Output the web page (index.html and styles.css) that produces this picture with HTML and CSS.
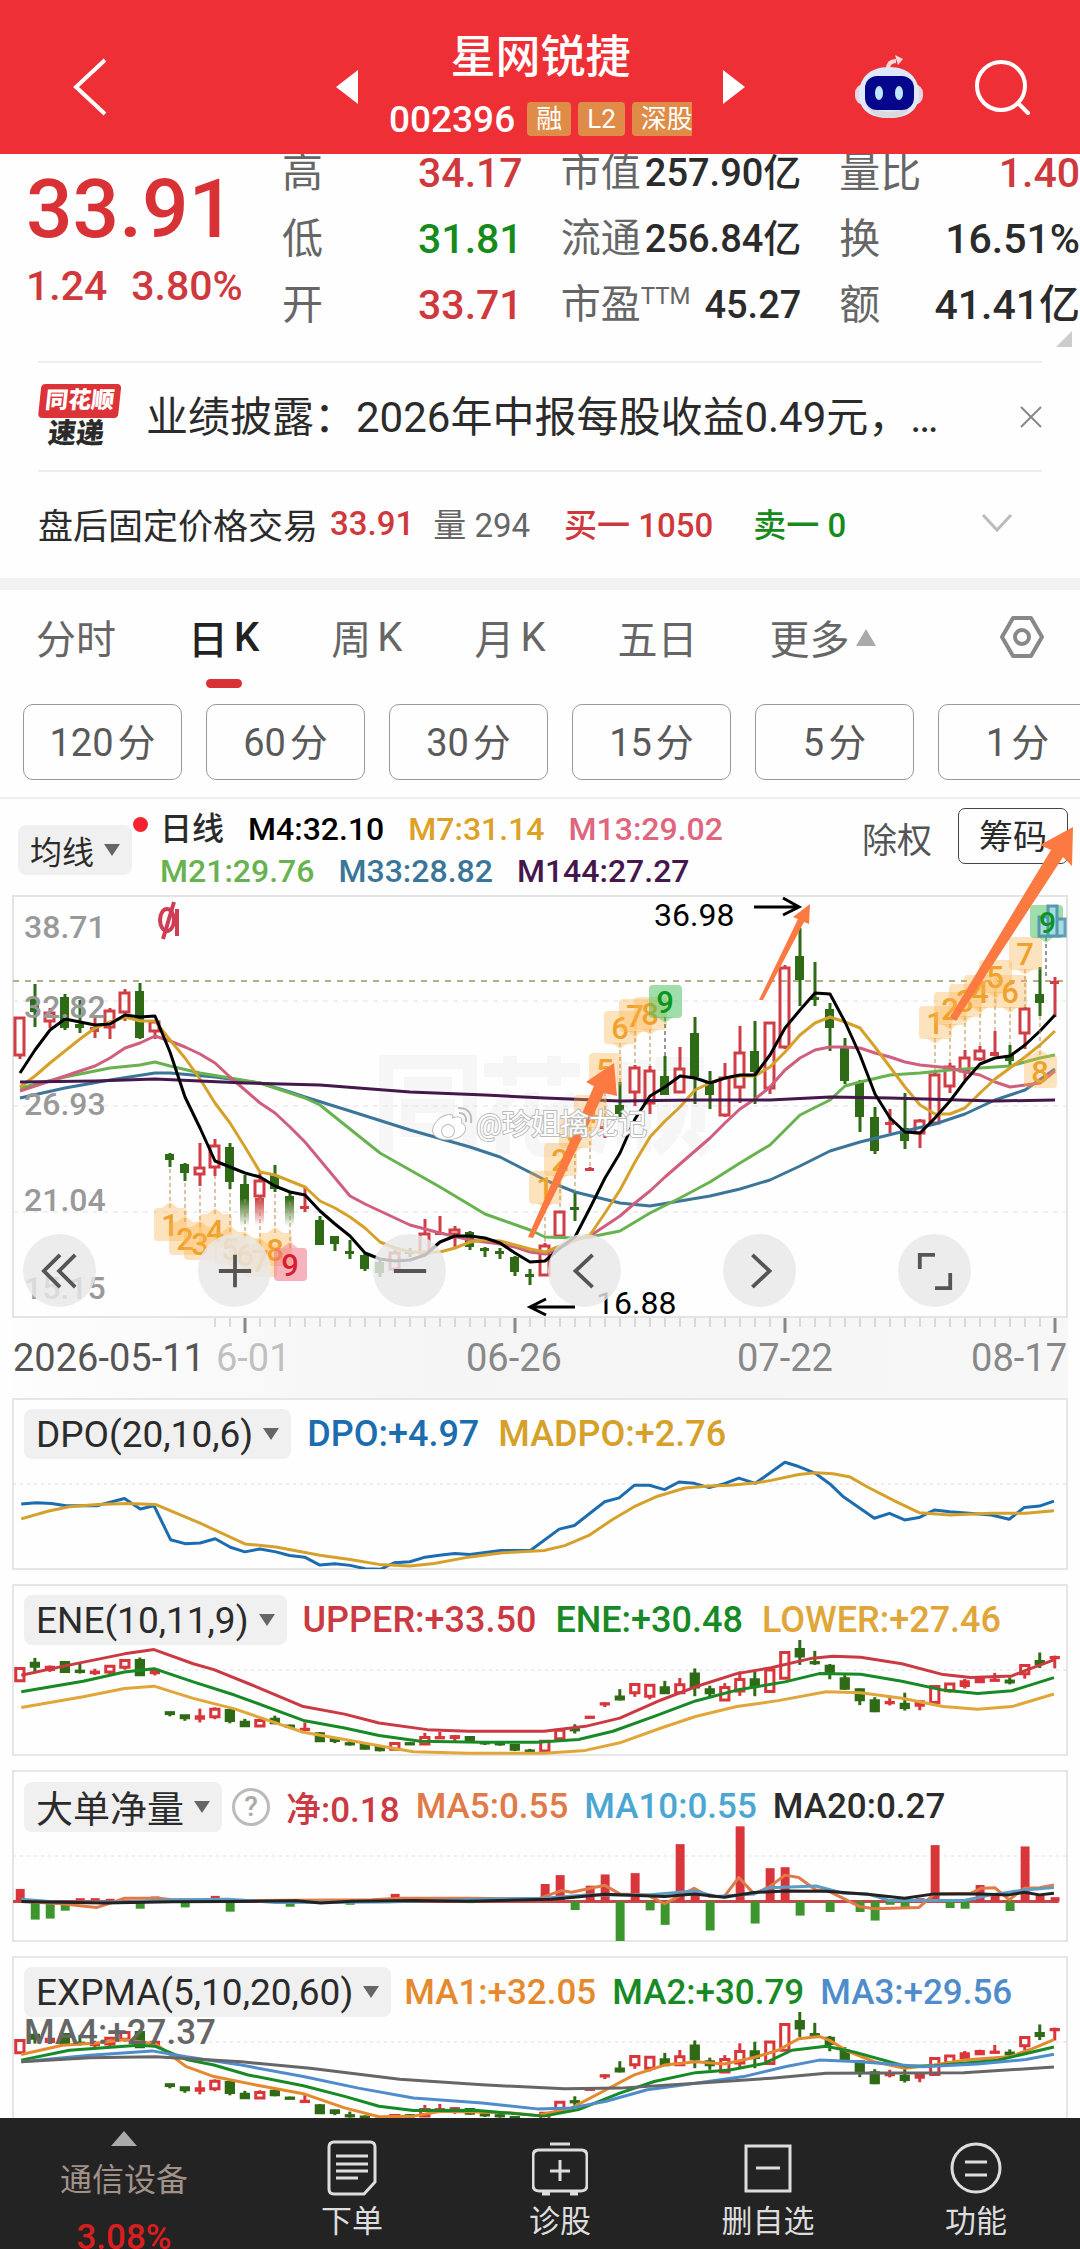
FILE: index.html
```html
<!DOCTYPE html>
<html lang="zh-CN">
<head>
    <meta charset="utf-8">
    <meta name="viewport" content="width=device-width, initial-scale=1">
    <title>星网锐捷 002396</title>
    <link rel="stylesheet" href="styles.css">
</head>
<body>
<header class="topbar">
    <button class="icon-btn back" aria-label="返回">
        <svg width="36" height="60" viewBox="0 0 36 60"><path d="M33 3 4 30 33 57" fill="none" stroke="#fff" stroke-width="4"/></svg>
    </button>
    <div class="stock">
        <button class="icon-btn" aria-label="上一只">
            <svg width="23" height="34" viewBox="0 0 23 34"><path d="M22 0V34L0 17z" fill="#fff"/></svg>
        </button>
        <div class="stock-name">
            <h1>星网锐捷</h1>
            <div class="stock-code">
                <span>002396</span>
                <i class="tag">融</i>
                <i class="tag">L2</i>
                <i class="tag">深股通</i>
            </div>
        </div>
        <button class="icon-btn" aria-label="下一只">
            <svg width="23" height="34" viewBox="0 0 23 34"><path d="M1 0V34L23 17z" fill="#fff"/></svg>
        </button>
    </div>
    <div class="tools">
        <button class="icon-btn" aria-label="助手">
            <svg width="70" height="64" viewBox="0 0 70 64">
                <path d="M34 14C34 8 37 6 42 6" fill="none" stroke="#ffdada" stroke-width="4"/>
                <path d="M41 0 49 4 44 10z" fill="#ffdada"/>
                <rect x="1" y="29" width="68" height="21" rx="9" fill="#e9d5e2"/>
                <path d="M35 12C54 12 65 23 65 39S54 63 35 63 5 55 5 39 16 12 35 12z" fill="#dfe9fb"/>
                <path d="M12 48C24 60 46 60 58 48 55 58 47 63 35 63S15 58 12 48z" fill="#d9d9de"/>
                <rect x="11" y="21" width="49" height="34" rx="12" fill="#06068c"/>
                <ellipse cx="25" cy="38" rx="4" ry="7" fill="#bfe6ff"/>
                <ellipse cx="45" cy="38" rx="4" ry="7" fill="#bfe6ff"/>
            </svg>
        </button>
        <button class="icon-btn" aria-label="搜索">
            <svg width="56" height="56" viewBox="0 0 56 56" fill="none" stroke="#fff" stroke-width="4">
                <circle cx="27" cy="27" r="24"/><path d="M44 44 54 54" stroke-linecap="round"/>
            </svg>
        </button>
    </div>
</header>

<section class="quote">
    <div class="price">
        <strong>33.91</strong>
        <p><span>1.24</span><span>3.80%</span></p>
    </div>
    <ul>
        <li><span>高</span><b class="up">34.17</b></li>
        <li><span>低</span><b class="down">31.81</b></li>
        <li><span>开</span><b class="up">33.71</b></li>
    </ul>
    <ul class="tight">
        <li><span>市值</span><b>257.90亿</b></li>
        <li><span>流通</span><b>256.84亿</b></li>
        <li><span>市盈<sup>TTM</sup></span><b>45.27</b></li>
    </ul>
    <ul>
        <li><span>量比</span><b class="up">1.40</b></li>
        <li><span>换</span><b>16.51%</b></li>
        <li><span>额</span><b>41.41亿</b></li>
    </ul>
    <svg class="corner" width="16" height="16" viewBox="0 0 16 16"><path d="M16 0V16H0z" fill="#ccc"/></svg>
</section>

<section class="news">
    <div class="news-logo">
        <b>同花顺</b>
        <span>速递</span>
    </div>
    <a href="#">业绩披露：2026年中报每股收益0.49元，…</a>
    <button class="icon-btn" aria-label="关闭">
        <svg width="22" height="22" viewBox="0 0 22 22"><path d="M1 1 21 21M21 1 1 21" stroke="#888" stroke-width="2"/></svg>
    </button>
</section>

<section class="after">
    <span class="after-title">盘后固定价格交易</span>
    <span class="up">33.91</span>
    <span class="vol">量 294</span>
    <span class="up">买一 1050</span>
    <span class="down">卖一 0</span>
    <button class="icon-btn" aria-label="展开">
        <svg width="32" height="20" viewBox="0 0 32 20"><path d="M2 2 16 17 30 2" fill="none" stroke="#bbb" stroke-width="3"/></svg>
    </button>
</section>

<nav class="tabs">
    <button>分时</button>
    <button class="active">日<span>K</span></button>
    <button>周<span>K</span></button>
    <button>月<span>K</span></button>
    <button>五日</button>
    <button>更多<svg width="20" height="17" viewBox="0 0 20 17"><path d="M10 0 20 17H0z" fill="#aaa"/></svg></button>
    <button class="setting" aria-label="设置">
        <svg width="44" height="44" viewBox="0 0 44 44" fill="none" stroke="#888" stroke-width="4">
            <path d="M13 3H31L42 22 31 41H13L2 22z" stroke-linejoin="round"/><circle cx="22" cy="22" r="7"/>
        </svg>
    </button>
</nav>

<div class="periods">
    <button>120<span>分</span></button>
    <button>60<span>分</span></button>
    <button>30<span>分</span></button>
    <button>15<span>分</span></button>
    <button>5<span>分</span></button>
    <button>1<span>分</span></button>
</div>

<section class="kline">
    <div class="kline-head">
        <button class="picker">均线<svg width="16" height="12" viewBox="0 0 16 12"><path d="M0 0H16L8 12z" fill="#666"/></svg></button>
        <div class="legend">
            <p><span class="dark">日线</span><span class="black">M4:32.10</span><span class="m7">M7:31.14</span><span class="m13">M13:29.02</span></p>
            <p><span class="m21">M21:29.76</span><span class="m33">M33:28.82</span><span class="m144">M144:27.27</span></p>
        </div>
        <button class="plain">除权</button>
        <button class="boxed">筹码</button>
    </div>
    <svg id="main" class="main-chart" viewBox="12 895 1056 503">
        <defs>
            <linearGradient id="fade-down" x1="0" y1="0" x2="0" y2="1"><stop offset="0" stop-color="#2f6b16"/><stop offset="1" stop-color="#2f6b16" stop-opacity="0"/></linearGradient>
            <linearGradient id="fade-up" x1="0" y1="0" x2="0" y2="1"><stop offset="0" stop-color="#cf3d45"/><stop offset="1" stop-color="#cf3d45" stop-opacity="0"/></linearGradient>
            <linearGradient id="axis-bg" x1="0" y1="0" x2="1" y2="0"><stop offset="0" stop-color="#fdfdfd"/><stop offset=".4" stop-color="#f5f5f5"/><stop offset="1" stop-color="#f7f7f7"/></linearGradient>
        </defs>
        <rect x="13" y="1318" width="1055" height="80" fill="url(#axis-bg)"/>
        <rect x="13" y="896" width="1054" height="421" fill="#fefefe" stroke="#e4e4e4" stroke-width="2"/>
        <g class="brand-mark" fill="none" stroke="#f6f6f6" stroke-width="14">
            <path d="M386 1152V1062H470V1152M404 1084H452M408 1106H448V1130H408z"/>
            <path d="M484 1070H580M510 1056V1086M554 1056V1086M512 1092 490 1124M503 1112V1154M532 1092V1140Q532 1150 544 1150H576M576 1098 534 1122"/>
            <path d="M604 1062V1120L596 1152M624 1062V1146M644 1060V1152M656 1064H704M664 1132V1084H698V1132M680 1100Q680 1134 656 1150M686 1132 706 1152"/>
        </g>
        <g class="grid">
            <path d="M13 1001H1066M13 1106H1066M13 1212H1066"/>
            <path class="now" d="M13 981H1066"/>
        </g>
        <g id="main-candles"></g>
        <g id="main-lines"></g>
        <g class="price-axis">
            <text x="24" y="938">38.71</text>
            <text x="24" y="1018">32.82</text>
            <text x="24" y="1115">26.93</text>
            <text x="24" y="1211">21.04</text>
            <text x="24" y="1299">15.15</text>
        </g>
        <g fill="none" stroke="#cf3d55" stroke-width="4">
            <ellipse cx="167" cy="920" rx="7" ry="11"/><path d="M177 909V936M174 902 163 939"/>
        </g>
        <g id="marks"></g>
        <path d="M1039 917H1048V936H1039zM1048 906H1057V936H1048zM1057 919H1065V936H1057z" fill="#a8dcea" stroke="#4a8cae" stroke-width="3" opacity=".85"/>
        <text class="nine" x="1039" y="933">9</text>
        <g class="peak">
            <text x="654" y="926">36.98</text>
            <path d="M754 907H798M783 898 799 907 783 915"/>
            <text x="596" y="1314">16.88</text>
            <path d="M575 1307H531M546 1299 530 1307 546 1315"/>
        </g>
        <g class="trend">
            <path d="M614 1063 586 1082 594 1086 528 1237 533 1238 604 1093 617 1096z"/>
            <path d="M810 904 793 917 798 919 759 1000 763 1000 804 922 809 924z"/>
            <path d="M1073 827 1040 845 1051 850 950 1017 956 1021 1063 857 1072 866z"/>
        </g>
        <g class="weibo">
            <path d="M449 1115C437 1117 431 1128 434 1134 439 1142 462 1141 465 1130 466 1125 462 1124 461 1123 463 1117 457 1116 452 1119 453 1116 452 1114 449 1115z"/>
            <path d="M459 1113Q467 1113 466 1122M458 1108Q473 1108 471 1123" class="wave"/>
            <circle cx="448" cy="1131" r="6"/>
            <text x="476" y="1135">@珍姐擒龙记</text>
        </g>
        <g id="ticks"></g>
        <g class="date-axis">
            <text x="13" y="1371" class="first">2026-05-11</text>
            <text x="216" y="1371" fill-opacity=".5">6-01</text>
            <text x="466" y="1371">06-26</text>
            <text x="737" y="1371">07-22</text>
            <text x="1067" y="1371" text-anchor="end">08-17</text>
        </g>
    </svg>
    <div class="chart-tools">
        <button aria-label="最早"><svg viewBox="0 0 40 40"><path d="M20 3 3 20 20 37M36 3 19 20 36 37"/></svg></button>
        <button aria-label="放大"><svg viewBox="0 0 40 40"><path d="M20 3V37M3 20H37"/></svg></button>
        <button aria-label="缩小"><svg viewBox="0 0 40 40"><path d="M3 20H37"/></svg></button>
        <button aria-label="前移"><svg viewBox="0 0 40 40"><path d="M28 3 10 20 28 37"/></svg></button>
        <button aria-label="后移"><svg viewBox="0 0 40 40"><path d="M12 3 30 20 12 37"/></svg></button>
        <button aria-label="全屏"><svg viewBox="0 0 40 40"><path d="M4 18V3H20M36 22V38H20"/></svg></button>
    </div>
</section>

<section class="panel">
    <svg id="dpo" viewBox="18 23 1532 516" preserveAspectRatio="none"></svg>
    <div class="panel-head wide">
        <button class="picker">DPO(20,10,6)<svg width="16" height="12" viewBox="0 0 16 12"><path d="M0 0H16L8 12z" fill="#666"/></svg></button>
        <span class="blue">DPO:+4.97</span><span class="gold">MADPO:+2.76</span>
    </div>
</section>
<section class="panel">
    <svg id="ene" viewBox="18 581 1532 516" preserveAspectRatio="none"></svg>
    <div class="panel-head wide">
        <button class="picker">ENE(10,11,9)<svg width="16" height="12" viewBox="0 0 16 12"><path d="M0 0H16L8 12z" fill="#666"/></svg></button>
        <span class="red">UPPER:+33.50</span><span class="green">ENE:+30.48</span><span class="amber">LOWER:+27.46</span>
    </div>
</section>
<section class="panel">
    <svg id="net" viewBox="18 29 1532 516" preserveAspectRatio="none"></svg>
    <div class="panel-head">
        <button class="picker">大单净量<svg width="16" height="12" viewBox="0 0 16 12"><path d="M0 0H16L8 12z" fill="#666"/></svg></button>
        <button class="help" aria-label="说明">?</button>
        <span class="red">净:0.18</span><span class="coral">MA5:0.55</span><span class="sky">MA10:0.55</span><span class="dark">MA20:0.27</span>
    </div>
</section>
<section class="panel">
    <svg id="expma" viewBox="18 587 1532 516" preserveAspectRatio="none"></svg>
    <div class="panel-head">
        <button class="picker">EXPMA(5,10,20,60)<svg width="16" height="12" viewBox="0 0 16 12"><path d="M0 0H16L8 12z" fill="#666"/></svg></button>
        <span class="orange">MA1:+32.05</span><span class="green">MA2:+30.79</span><span class="steel">MA3:+29.56</span>
        <span class="gray">MA4:+27.37</span>
    </div>
</section>

<footer class="bottom">
    <button class="sector">
        <svg width="26" height="15" viewBox="0 0 26 15"><path d="M13 0 26 15H0z" fill="#aaa"/></svg>
        <span>通信设备</span>
        <b>3.08%</b>
    </button>
    <button>
        <svg width="56" height="56" viewBox="0 0 56 56"><path d="M10 2H46Q51 2 51 7V42L40 54H10Q5 54 5 49V7Q5 2 10 2zM12 16H44M12 24H44M12 31H44M12 38H34"/></svg>
        <span>下单</span>
    </button>
    <button>
        <svg width="56" height="56" viewBox="0 0 56 56"><path d="M7 10H49Q55 10 55 16V45Q55 51 49 51H7Q1 51 1 45V16Q1 10 7 10zM18 4H38M10 54H18M38 54H46M28 20V41M18 31H38"/></svg>
        <span>诊股</span>
    </button>
    <button>
        <svg width="56" height="56" viewBox="0 0 56 56"><path d="M6 6H50V51H6zM16 28H40"/></svg>
        <span>删自选</span>
    </button>
    <button>
        <svg width="56" height="56" viewBox="0 0 56 56"><circle cx="28" cy="28" r="24"/><path d="M17 22H39M17 35H39"/></svg>
        <span>功能</span>
    </button>
</footer>
<script src="app.js"></script>
</body>
</html>
```

FILE: styles.css
```css
* {
    box-sizing: border-box;
}

body {
    margin: 0;
    background: #fefefe;
    color: #2b2b2b;
    font-family: Roboto, "Noto Sans CJK SC", sans-serif;
    overflow-x: hidden;
}

button {
    border: none;
    padding: 0;
    background: none;
    color: inherit;
    font: inherit;
    cursor: pointer;
}

button svg {
    display: block;
}

h1, p, ul {
    margin: 0;
    padding: 0;
}

.up {
    color: #cf383c;
}

.down {
    color: #178a1c;
}

/* top bar */
.topbar {
    position: relative;
    z-index: 2;
    display: flex;
    align-items: center;
    height: 154px;
    padding: 20px 50px 0 72px;
    background: #ef2f36;
    color: #fff;
}

.back {
    margin-right: 228px;
}

.stock {
    display: flex;
    align-items: center;
    gap: 30px;
}

.stock-name {
    width: 303px;
    margin-top: 4px;
    text-align: center;
}

.stock-name h1 {
    font-size: 45px;
    line-height: 60px;
    font-weight: 500;
}

.stock-code {
    display: flex;
    align-items: center;
    gap: 7px;
    height: 62px;
    overflow: hidden;
    font-size: 37px;
    font-weight: 500;
}

.stock-code span {
    margin-right: 5px;
}

.tag {
    flex: none;
    padding: 0 9px;
    border-radius: 4px;
    background: #df8c48;
    font-size: 26px;
    line-height: 34px;
    font-style: normal;
    font-weight: 400;
}

.tools {
    display: flex;
    align-items: center;
    gap: 50px;
    margin-left: auto;
}

/* quote */
.quote {
    position: relative;
    display: grid;
    grid-template-columns: 218px 1fr 1fr 1fr;
    column-gap: 38px;
    height: 207px;
    padding-left: 26px;
}

.price {
    color: #d93236;
}

.price strong {
    display: block;
    margin-top: 8px;
    font-size: 82px;
    line-height: 94px;
    font-weight: 500;
}

.price p {
    display: flex;
    gap: 24px;
    margin-top: 4px;
    font-size: 41px;
    line-height: 52px;
    color: #cf383c;
    font-weight: 500;
    white-space: nowrap;
}

.quote ul {
    margin-top: -14px;
    list-style: none;
    font-size: 41px;
    line-height: 66px;
    white-space: nowrap;
}

.quote li {
    display: flex;
    justify-content: space-between;
    height: 66px;
}

.quote li span {
    color: #666;
}

.quote li b {
    font-weight: 500;
}

.quote .tight {
    font-size: 40px;
}

.quote .tight b {
    font-size: 38px;
}

.quote sup {
    font-size: 24px;
    line-height: 0;
}

.corner {
    position: absolute;
    right: 8px;
    bottom: 14px;
}

/* news row */
.news {
    display: flex;
    align-items: center;
    height: 111px;
    margin: 0 38px;
    border-top: 2px solid #eee;
    border-bottom: 2px solid #eee;
}

.news-logo {
    width: 80px;
    margin-right: 28px;
    transform: skewX(-6deg);
    text-align: center;
    font-weight: 900;
}

.news-logo b {
    display: block;
    border-radius: 4px;
    background: #dc3338;
    color: #fff;
    font-size: 23px;
    line-height: 34px;
}

.news-logo span {
    display: block;
    font-size: 28px;
    line-height: 32px;
}

.news a {
    flex: 1;
    padding-bottom: 6px;
    color: #2b2b2b;
    font-size: 42px;
    text-decoration: none;
    white-space: nowrap;
}

/* after-hours row */
.after {
    display: flex;
    align-items: center;
    height: 106px;
    padding: 0 67px 4px 38px;
    font-size: 33px;
}

.after-title {
    margin-right: 12px;
    font-size: 35px;
}

.after .up,
.after .down {
    font-weight: 500;
}

.after .vol {
    margin: 0 34px 0 19px;
    color: #666;
}

.after .down {
    margin-left: 40px;
}

.after .icon-btn {
    margin-left: auto;
}

/* tabs */
.tabs {
    display: flex;
    align-items: center;
    gap: 72px;
    height: 126px;
    padding: 0 36px 20px;
    border-top: 12px solid #f3f3f3;
    color: #666;
    font-size: 40px;
}

.tabs button {
    position: relative;
    display: flex;
    align-items: center;
    gap: 6px;
}

.tabs .active {
    color: #222;
    font-weight: 500;
}

.tabs .active::after {
    content: "";
    position: absolute;
    bottom: -22px;
    left: 50%;
    width: 36px;
    height: 9px;
    margin-left: -18px;
    border-radius: 5px;
    background: #d93236;
}

.tabs .setting {
    margin-left: auto;
}

.periods {
    display: flex;
    gap: 24px;
    height: 95px;
    padding-left: 23px;
    border-bottom: 2px solid #eee;
    overflow: hidden;
}

.periods button {
    flex: none;
    width: 159px;
    height: 76px;
    padding-bottom: 5px;
    border: 1px solid #999;
    border-radius: 10px;
    color: #5a5a5a;
    font-size: 38px;
}

.periods span {
    margin-left: 4px;
}

/* main chart */
.kline {
    position: relative;
}

.kline-head {
    display: flex;
    align-items: flex-start;
    height: 96px;
    padding: 9px 12px 0 18px;
}

.picker {
    display: flex;
    align-items: center;
    gap: 10px;
    height: 50px;
    padding: 0 12px;
    border-radius: 8px;
    background: #f0f0f0;
}

.kline-head .picker {
    position: relative;
    margin-top: 17px;
    font-size: 32px;
}

.kline-head .picker::after {
    content: "";
    position: absolute;
    top: -8px;
    right: -16px;
    width: 15px;
    height: 15px;
    border-radius: 50%;
    background: #f5232f;
}

.legend {
    margin-left: 28px;
    font-size: 32px;
    font-weight: 500;
    line-height: 42px;
}

.legend p {
    display: flex;
    gap: 24px;
    white-space: nowrap;
}

.kline-head .plain {
    margin: 8px 26px 0 auto;
    color: #555;
    font-size: 35px;
    line-height: 52px;
}

.kline-head .boxed {
    width: 110px;
    height: 56px;
    padding-bottom: 3px;
    border: 1px solid #444;
    border-radius: 7px;
    font-size: 34px;
}

.dark { color: #2b2b2b; }
.black { color: #000; }
.m7 { color: #dca125; }
.m13 { color: #e0657f; }
.m21 { color: #68b34f; }
.m33 { color: #3b759a; }
.m144 { color: #45174c; }
.blue { color: #1c6cb0; }
.gold { color: #d6a12b; }
.red { color: #cb3a42; }
.green { color: #178a25; }
.amber { color: #e0a63a; }
.coral { color: #e07a48; }
.sky { color: #4ba6d3; }
.orange { color: #e5892f; }
.steel { color: #4f8ccb; }
.gray { color: #666; }

.main-chart {
    display: block;
    position: relative;
    width: calc(100% - 24px);
    margin: 0 12px;
    overflow: visible;
}

.grid path {
    stroke: #e2e2e2;
    stroke-width: 1;
    stroke-dasharray: 5 5;
}

.grid .now {
    stroke: #b5ae84;
    stroke-width: 2;
    stroke-dasharray: 6 6;
}

.price-axis text {
    fill: #999;
    font-size: 32px;
    font-weight: 500;
}

.date-axis text {
    fill: #888;
    font-size: 38px;
}

.date-axis .first {
    fill: #555;
}

.peak text {
    font-size: 32px;
}

.peak path {
    fill: none;
    stroke: #000;
    stroke-width: 3;
}

.trend path {
    fill: #fb7a42;
}

.nine {
    fill: #0a9420;
    font-size: 30px;
    font-weight: 500;
}

.weibo {
    fill: #fff;
    stroke: #bbb;
    stroke-width: 2;
    paint-order: stroke;
}

.weibo text {
    font-size: 29px;
}

.weibo .wave {
    fill: none;
}

.chart-tools {
    position: absolute;
    left: 23px;
    bottom: 91px;
    display: flex;
    gap: 102px;
}

.chart-tools button {
    display: flex;
    align-items: center;
    justify-content: center;
    width: 73px;
    height: 73px;
    border-radius: 50%;
    background: rgba(232, 232, 232, .82);
}

.chart-tools svg {
    width: 38px;
    height: 38px;
    fill: none;
    stroke: #555;
    stroke-width: 4;
}

/* indicator panels */
.panel {
    position: relative;
    height: 172px;
    margin: 0 12px 14px;
    border: 2px solid #e6e6e6;
}

.panel > svg {
    position: absolute;
    inset: -1px;
    width: calc(100% + 2px);
    height: calc(100% + 2px);
}

.panel-head {
    position: relative;
    display: flex;
    flex-wrap: wrap;
    align-items: center;
    column-gap: 16px;
    padding: 9px 0 0 10px;
    font-size: 35px;
    font-weight: 500;
    white-space: nowrap;
}

.panel-head.wide {
    column-gap: 19px;
    font-size: 36px;
}

.panel-head .picker {
    font-size: 37px;
    font-weight: 400;
}

.panel-head .picker + span {
    margin-left: -3px;
}

.panel-head .gray {
    margin-top: -5px;
}

.help {
    width: 38px;
    height: 38px;
    margin: 0 0 0 -6px;
    border: 3px solid #bbb;
    border-radius: 50%;
    color: #aaa;
    font-size: 28px;
    line-height: 32px;
}

/* bottom bar */
.bottom {
    position: relative;
    z-index: 2;
    display: flex;
    height: 132px;
    margin-top: -24px;
    background: #232323;
    color: #ddd;
    font-size: 31px;
    overflow: hidden;
}

.bottom button {
    display: flex;
    flex: 208;
    flex-direction: column;
    align-items: center;
    padding-top: 22px;
    line-height: 44px;
}

.bottom button svg {
    flex: none;
    margin-bottom: 4px;
    fill: none;
    stroke: #ddd;
    stroke-width: 3;
}

.bottom .sector {
    flex: 248;
    padding-top: 13px;
    color: #a19188;
    font-size: 32px;
}

.bottom .sector svg {
    margin-bottom: 12px;
    stroke: none;
}

.bottom .sector b {
    margin-top: 14px;
    color: #d81e1e;
    font-size: 35px;
    font-weight: 500;
}
```

FILE: app.js
```js
const NS = "http://www.w3.org/2000/svg";
const RED = "#cf3d45";
const GREEN = "#2f6b16";

// [up, high, body top, body bottom, low]
const candles = [
    [1,1017,1017,1056,1059],[0,984,999,1012,1027],[1,1008,1012,1022,1028],[0,994,997,1028,1030],[0,1000,1024,1028,1033],
    [1,1018,1027,1032,1038],[1,1008,1010,1028,1039],[1,989,992,1013,1021],[0,983,991,1038,1039],[1,1020,1021,1032,1039],
    [0,1153,1154,1160,1167],[0,1163,1164,1173,1181],[1,1143,1167,1175,1186],[1,1139,1145,1168,1176],[0,1143,1147,1182,1189],
    [0,1175,1184,1198,1199],[1,1173,1180,1197,1198],[0,1165,1175,1189,1192],[0,1193,1196,1199,1200],[1,1186,1206,1208,1212],
    [0,1216,1220,1245,1245],[0,1236,1236,1244,1251],[0,1240,1251,1253,1259],[0,1252,1255,1269,1271],[0,1260,1262,1273,1277],
    [1,1250,1252,1270,1271],[0,1248,1251,1253,1257],[1,1219,1233,1254,1255],[1,1216,1232,1235,1235],[1,1226,1229,1235,1247],
    [0,1231,1232,1247,1250],[0,1247,1248,1251,1257],[0,1248,1251,1253,1259],[0,1256,1257,1272,1276],[0,1269,1274,1276,1285],
    [1,1243,1245,1276,1276],[1,1211,1211,1237,1237],[0,1192,1207,1209,1221],[1,1167,1168,1170,1170],[1,1123,1126,1129,1138],
    [0,1082,1105,1114,1117],[1,1065,1067,1093,1106],[1,1066,1070,1104,1114],[0,1056,1076,1095,1095],[1,1047,1068,1093,1093],
    [0,1017,1033,1077,1104],[0,1071,1082,1095,1109],[1,1063,1077,1116,1117],[1,1026,1052,1088,1103],[0,1021,1051,1072,1104],
    [1,1022,1022,1089,1094],[1,965,967,1048,1049],[0,928,956,980,1006],[0,962,997,999,1006],[0,1003,1009,1028,1051],
    [0,1038,1048,1081,1084],[0,1080,1082,1117,1132],[0,1107,1117,1151,1154],[1,1109,1122,1124,1133],[0,1093,1128,1141,1149],
    [1,1119,1120,1134,1148],[1,1072,1074,1124,1125],[1,1063,1066,1087,1093],[1,1050,1057,1072,1080],[1,1046,1050,1060,1061],
    [1,1031,1052,1056,1056],[0,1045,1055,1061,1067],[1,1007,1008,1034,1049],[0,967,994,1003,1016],[1,977,981,984,1017]
];

// moving averages as [index, y] pairs
const averages = [
    ["#3b759a", 3, [0,1098,3,1088,6,1080,9,1073,10,1073,13,1077,16,1083,18,1092,19,1097,22,1111,26,1130,30,1147,32,1157,35,1180,37,1192,40,1203,42,1206,44,1201,46,1196,48,1189,50,1180,52,1166,54,1151,56,1142,59,1131,61,1124,63,1114,65,1100,67,1090,69,1069]],
    ["#68b34f", 3, [0,1088,3,1077,6,1068,8,1065,9,1062,10,1066,12,1073,14,1078,16,1083,19,1098,20,1105,24,1153,28,1187,31,1214,34,1230,35,1237,37,1238,38,1237,40,1231,42,1213,44,1198,46,1182,48,1163,50,1145,52,1115,54,1100,55,1086,56,1082,58,1075,60,1073,62,1070,64,1068,66,1066,68,1058,69,1055]],
    ["#cf5f7c", 3, [0,1091,3,1076,5,1066,6,1058,7,1048,8,1043,9,1036,10,1041,11,1047,12,1054,13,1063,14,1077,15,1090,16,1103,17,1113,18,1127,19,1142,20,1160,21,1178,22,1196,23,1204,24,1211,25,1218,26,1225,27,1229,28,1233,30,1240,32,1244,33,1247,34,1252,35,1254,36,1248,37,1240,38,1236,39,1226,40,1216,41,1203,42,1191,43,1177,44,1164,45,1151,46,1138,47,1123,48,1109,49,1099,50,1087,51,1070,52,1058,53,1050,54,1047,55,1047,56,1048,57,1053,58,1057,59,1062,60,1065,62,1068,63,1072,64,1075,65,1082,66,1087,67,1085,68,1083,69,1071]],
    ["#d6a12b", 3, [0,1087,1,1076,2,1063,3,1051,4,1039,5,1028,6,1022,7,1017,8,1021,9,1021,10,1040,11,1058,12,1079,13,1103,14,1123,15,1147,16,1172,17,1175,18,1181,19,1187,20,1201,21,1208,22,1217,23,1228,24,1242,25,1248,26,1252,28,1252,29,1248,30,1242,31,1240,32,1241,33,1245,34,1249,35,1252,36,1246,37,1240,38,1235,39,1213,40,1190,41,1162,42,1137,43,1121,44,1107,45,1090,46,1083,47,1078,48,1076,49,1076,50,1067,51,1052,52,1035,53,1023,54,1017,55,1022,56,1028,57,1047,58,1067,59,1087,60,1105,61,1114,62,1114,63,1108,64,1093,65,1079,66,1068,67,1057,68,1045,69,1031]],
    ["#45174c", 3, [0,1082,5,1081,9,1079,15,1083,20,1085,26,1092,31,1095,35,1098,40,1101,45,1100,50,1100,54,1097,58,1098,65,1101,69,1100]],
    ["#000", 3, [0,1073,1,1050,2,1030,3,1019,4,1022,5,1025,6,1024,7,1015,8,1017,9,1016,10,1052,11,1097,12,1128,13,1161,14,1167,15,1173,16,1177,17,1186,18,1192,19,1195,20,1211,21,1224,22,1236,23,1253,24,1259,25,1261,26,1260,27,1255,28,1242,29,1236,30,1236,31,1238,32,1243,33,1253,34,1262,35,1261,36,1248,37,1237,38,1208,39,1178,40,1153,41,1119,42,1096,43,1087,44,1076,45,1078,46,1083,47,1078,48,1075,49,1075,50,1055,51,1028,52,1010,53,993,54,994,55,1022,56,1055,57,1094,58,1118,59,1132,60,1133,61,1118,62,1101,63,1081,64,1064,65,1058,66,1056,67,1045,68,1031,69,1015]]
];

// sequence marks: [candle index, digit, box centre, kind, 1 = box above the candle]
const marks = [
    [10,1,1224,"n",0],[11,2,1238,"n",0],[12,3,1243,"n",0],[13,4,1230,"n",0],[14,5,1248,"n",0],[15,6,1254,"n",0],[16,7,1260,"n",0],[17,8,1249,"n",0],[18,9,1264,"r",0],
    [35,1,1187,"n",1],[36,2,1159,"n",1],[37,3,1131,"n",1],[38,4,1111,"n",1],[39,5,1069,"n",1],[40,6,1027,"n",1],[41,7,1015,"n",1],[42,8,1013,"n",1],[43,9,1001,"g",1],
    [61,1,1022,"n",1],[62,2,1008,"n",1],[63,3,1000,"n",1],[64,4,991,"n",1],[65,5,976,"n",1],[66,6,991,"n",1],[67,7,953,"n",1],[68,8,1071,"n",0],[69,9,921,"g",1]
];

function add(parent, tag, attrs, text) {
    const node = document.createElementNS(NS, tag);
    for (const key in attrs) {
        node.setAttribute(key, attrs[key]);
    }
    if (text !== undefined) {
        node.textContent = text;
    }
    parent.appendChild(node);
    return node;
}

const byId = id => document.getElementById(id);
const mainX = i => 20 + i * 15;

// main candles
function drawMain() {
    const g = byId("main-candles");
    candles.forEach(([up, high, top, bottom, low], i) => {
        const x = mainX(i);
        const color = up ? RED : GREEN;
        const h = Math.max(bottom - top, 3);
        if (up && h > 5) {
            add(g, "path", { d: `M${x} ${high}V${top}M${x} ${bottom}V${low}`, stroke: color, "stroke-width": 3 });
            add(g, "rect", { x: x - 5, y: top + 1, width: 9, height: h - 2, fill: "none", stroke: color, "stroke-width": 3 });
        } else {
            add(g, "path", { d: `M${x} ${high}V${low}`, stroke: color, "stroke-width": 3 });
            add(g, "rect", { x: x - 5, y: top, width: 9, height: h, fill: color });
        }
    });
    [15, 16, 18].forEach(i => {
        add(g, "rect", { x: mainX(i) - 5, y: 1198, width: 9, height: 28, fill: i === 16 ? "url(#fade-up)" : "url(#fade-down)" });
    });

    const lines = byId("main-lines");
    averages.forEach(([color, width, data]) => {
        let d = "";
        for (let i = 0; i < data.length; i += 2) {
            d += (i ? "L" : "M") + mainX(data[i]) + " " + data[i + 1];
        }
        add(lines, "path", { d: d, fill: "none", stroke: color, "stroke-width": width, "stroke-linejoin": "round" });
    });

    const box = byId("marks");
    const skin = { n: ["#fbb54a", "#efa12c"], r: ["#f2667a", "#d81f32"], g: ["#3fbd55", "#0a9420"] };
    marks.forEach(([i, digit, y, kind, above]) => {
        const x = i === 69 ? 1046 : mainX(i);
        const [bg, fg] = skin[kind];
        add(box, "path", { d: above ? `M${x} ${y + 16}V${candles[i][1]}` : `M${x} ${y - 16}V${candles[i][4]}`, stroke: kind === "g" ? "#333" : "#b98a4a", "stroke-dasharray": "4 3" });
        const tip = above ? `M${x - 8} ${y + 16}L${x} ${y + 22} ${x + 8} ${y + 16}z` : `M${x - 8} ${y - 16}L${x} ${y - 22} ${x + 8} ${y - 16}z`;
        add(box, "rect", { x: x - 16, y: y - 16, width: 33, height: 33, rx: 4, fill: bg, "fill-opacity": kind === "n" ? .36 : .5 });
        add(box, "path", { d: tip, fill: bg, "fill-opacity": .4 });
        if (i !== 69) {
            add(box, "text", { x: x, y: y + 12, "text-anchor": "middle", "font-size": 31, "font-weight": 500, fill: fg }, digit);
        }
    });

    const ticks = byId("ticks");
    for (let i = 13; i < 70; i++) {
        const major = [15, 33, 51, 69].includes(i);
        add(ticks, "path", { d: `M${mainX(i)} 1318v${major ? 15 : 9}`, stroke: major ? "#888" : "#bbb", "stroke-width": major ? 3 : 1 });
    }
}

function line(svg, color, points, width) {
    add(svg, "polyline", { points: points, fill: "none", stroke: color, "stroke-width": width || 3, "stroke-linejoin": "round", "vector-effect": "non-scaling-stroke" });
}

function dots(svg, y) {
    add(svg, "path", { d: `M18 ${y}H1550`, stroke: "#ddd", "stroke-dasharray": "3 4", "vector-effect": "non-scaling-stroke" });
}

// small copies of the candles on a squeezed scale
function smallCandles(svg, offset) {
    const sy = v => offset + (v - 927) * 0.969;
    candles.forEach(([up, high, top, bottom, low], i) => {
        const x = 28 + i * 21.8;
        const color = up ? "#d8363b" : GREEN;
        const h = Math.max(sy(bottom) - sy(top), 4);
        add(svg, "path", { d: `M${x} ${sy(high)}V${sy(low)}`, stroke: color, "stroke-width": 3, "vector-effect": "non-scaling-stroke" });
        const hollow = up && h > 15;
        add(svg, "rect", {
            x: x - 6, y: sy(top), width: 12, height: h, fill: hollow ? "#fff" : color,
            stroke: color, "stroke-width": hollow ? 3 : 2, "vector-effect": "non-scaling-stroke"
        });
    });
}

function drawPanels() {
    const dpo = byId("dpo");
    dots(dpo, 281);
    line(dpo, "#1c6cb0", "30,342 52,338 74,340 95,347 140,347 180,325 203,357 223,347 247,450 268,462 290,460 312,447 334,473 355,487 377,478 400,487 420,498 442,503 464,527 486,523 508,528 530,538 552,540 572,520 595,517 617,503 638,497 660,492 682,495 727,483 770,483 812,418 834,407 878,335 899,323 921,285 943,285 965,298 986,275 1008,279 1030,292 1052,280 1073,263 1097,279 1140,215 1160,228 1183,247 1205,280 1225,320 1248,353 1270,385 1292,370 1314,390 1335,383 1357,360 1380,365 1440,375 1466,388 1488,352 1510,348 1531,333");
    line(dpo, "#d6a12b", "30,387 70,363 100,350 140,343 185,340 225,343 250,365 290,400 355,463 400,472 464,497 508,510 550,525 595,530 630,522 680,503 730,490 790,483 820,468 855,437 890,388 921,350 955,318 995,293 1030,287 1060,285 1100,277 1120,270 1160,252 1185,247 1210,250 1235,260 1260,290 1300,333 1335,368 1380,375 1440,370 1490,370 1531,362");

    const ene = byId("ene");
    dots(ene, 839);
    smallCandles(ene, 747);
    line(ene, "#cb3a42", "30,855 90,828 180,790 223,777 280,820 310,838 360,880 440,950 500,973 550,1000 620,1020 680,1025 790,1025 850,1010 900,985 960,930 1010,890 1070,850 1120,832 1180,803 1210,797 1250,800 1310,820 1370,853 1410,862 1470,857 1490,840 1531,808");
    line(ene, "#178a25", "30,905 120,873 180,845 223,835 280,875 340,915 440,992 500,1015 550,1038 610,1055 700,1058 780,1058 840,1050 890,1025 950,980 1010,933 1070,900 1140,875 1190,850 1250,852 1310,873 1370,900 1420,910 1470,902 1531,862");
    line(ene, "#e0a63a", "30,953 120,920 180,895 223,888 280,925 340,957 440,1028 500,1050 560,1073 600,1087 680,1092 790,1092 850,1083 900,1060 960,1015 1010,980 1070,950 1130,932 1200,905 1250,908 1310,925 1370,950 1420,958 1470,950 1531,912");

    // net volume bars: [index, y of the bar end]
    const net = byId("net");
    const zero = 425;
    const bars = [[0,387],[1,480],[2,477],[3,453],[4,415],[5,415],[6,417],[8,447],[9,410],[11,443],[13,408],[14,456],[18,441],[22,435],[24,418],[25,402],[30,430],[35,372],[36,345],[37,451],[38,377],[39,343],[40,547],[41,339],[42,452],[43,496],[44,251],[45,400],[46,513],[48,197],[49,492],[50,324],[51,321],[52,468],[54,457],[56,457],[57,483],[58,435],[59,445],[60,415],[61,254],[62,445],[63,447],[64,375],[65,400],[66,454],[67,258],[68,405],[69,412]];
    dots(net, 287);
    add(net, "path", { d: `M18 ${zero}H1538`, stroke: "#c4484c", "stroke-width": 3, "vector-effect": "non-scaling-stroke" });
    bars.forEach(([i, y]) => {
        add(net, "rect", { x: 22 + i * 21.8, y: Math.min(y, zero), width: 13, height: Math.abs(y - zero), fill: y < zero ? "#d8363b" : "#3c962d" });
    });
    line(net, "#e07a48", "30,425 90,432 115,438 140,443 160,430 180,415 230,415 250,420 300,423 540,420 580,415 680,415 780,418 815,392 830,397 878,376 900,402 940,405 965,432 1008,385 1030,410 1052,410 1073,352 1095,402 1118,380 1140,345 1160,352 1185,390 1205,395 1248,440 1270,447 1335,443 1357,402 1410,400 1425,385 1445,383 1466,420 1488,385 1510,383 1531,375");
    line(net, "#5d9cc4", "30,418 90,428 180,427 250,420 330,418 400,428 560,427 700,418 790,415 850,405 940,405 1008,393 1040,410 1095,402 1118,383 1185,378 1225,400 1260,402 1292,422 1400,422 1440,405 1488,390 1531,383");
    line(net, "#222", "30,425 150,430 250,426 330,425 430,423 465,430 510,424 600,422 680,424 800,418 830,413 878,403 965,410 1008,402 1052,412 1095,398 1140,393 1200,394 1260,403 1314,415 1357,402 1425,402 1466,405 1488,397 1510,405 1531,400");

    const expma = byId("expma");
    dots(expma, 845);
    smallCandles(expma, 753);
    line(expma, "#e5892f", "30,883 90,855 140,848 180,838 225,850 270,920 310,950 377,978 442,1003 500,1045 550,1072 600,1070 640,1055 740,1060 780,1068 830,1045 880,990 921,945 965,915 1010,905 1052,912 1095,892 1130,870 1160,835 1190,828 1205,840 1230,872 1270,905 1314,925 1357,915 1400,900 1466,890 1500,865 1531,838");
    line(expma, "#178a25", "30,900 100,870 200,855 225,858 270,898 310,915 360,945 440,978 500,1010 550,1040 600,1053 690,1052 790,1070 840,1050 900,1000 950,965 1010,938 1060,930 1110,910 1150,870 1200,858 1240,875 1314,918 1357,917 1450,900 1531,860");
    line(expma, "#4f8ccb", "30,905 130,885 220,872 270,890 350,915 440,950 520,985 600,1015 700,1030 780,1048 830,1045 880,1025 940,990 1010,970 1080,950 1140,920 1190,900 1250,905 1340,920 1420,912 1490,898 1531,882");
    line(expma, "#666", "30,905 130,893 225,890 350,905 450,925 580,958 700,975 820,987 900,985 1000,972 1120,955 1200,940 1400,938 1531,921");
}

drawMain();
drawPanels();
```
